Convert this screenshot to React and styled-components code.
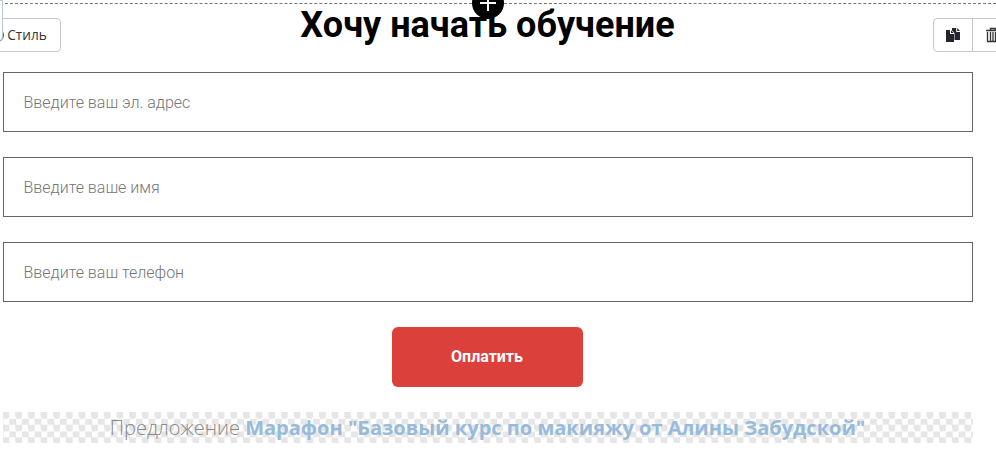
import React from 'react';
import styled, { createGlobalStyle } from 'styled-components';

const GlobalStyle = createGlobalStyle`
  * {
    box-sizing: border-box;
  }

  body {
    background: #fff;
    margin: 0;
  }
`;

const Section = styled.section`
  border-top: 1px dashed #777;
  height: 464px;
  margin-top: 3px;
  padding: 0 23px 0 3px;
  position: relative;
`;

const Screen = styled.div`
  display: flow-root;
  font-family: Roboto, sans-serif;
  height: 467px;
  overflow: hidden;
  position: relative;
`;

const Title = styled.h2`
  color: #000;
  font-size: 36px;
  font-weight: 700;
  height: 68px;
  line-height: 42px;
  margin: 0;
  padding-right: 1px;
  text-align: center;
  white-space: nowrap;
`;

const Form = styled.form`
  align-items: center;
  display: flex;
  flex-direction: column;
  gap: 25px;
`;

const Input = styled.input`
  background: #fff;
  border: 1px solid #666;
  border-radius: 0;
  color: #333;
  font: 300 16px Roboto, sans-serif;
  height: 60px;
  outline: none;
  padding: 0 20px 0 19.5px;
  width: 100%;

  &::placeholder {
    color: #757575;
    opacity: 1;
  }
`;

const Submit = styled.button`
  background: #dc403b;
  border: 0;
  border-radius: 6px;
  color: #fff;
  font: 700 16px Roboto, sans-serif;
  height: 60px;
  margin-right: 2px;
  padding: 0 0 2px;
  width: 191px;
`;

const Offer = styled.div`
  background: repeating-conic-gradient(#e6e6e6 0 25%, #fff 0 50%) -6.33px 0 / 12.66px 12.66px;
  color: #888;
  font: 300 20px/31px 'Open Sans', sans-serif;
  height: 31px;
  padding-right: 1px;
  text-align: center;
  white-space: nowrap;
  width: 100%;
`;

const OfferName = styled.b`
  color: #98bbdb;
  font-weight: 700;
`;

const AddButton = styled.button`
  align-items: center;
  background: #000;
  border: 0;
  border-radius: 50%;
  display: flex;
  height: 32px;
  justify-content: center;
  left: 472px;
  padding: 0;
  position: absolute;
  top: -13px;
  width: 32px;
`;

const Toolbar = styled.div`
  background: #fff;
  border: 1px solid #c8c8c8;
  border-radius: 4px;
  display: flex;
  height: 34px;
  left: ${(props) => props.$left}px;
  position: absolute;
  top: 18px;
`;

const ToolButton = styled.button`
  align-items: center;
  background: none;
  border: 0;
  color: #333;
  display: flex;
  font: 400 13.6px 'Open Sans', sans-serif;
  gap: 3px;
  justify-content: center;
  padding: 0 0 1px;
  width: ${(props) => props.$width}px;

  & + & {
    border-left: 1px solid #c8c8c8;
  }
`;

const PanelEdge = styled.div`
  background: #fff;
  border: 1px solid #b9c6d3;
  border-radius: 0 0 4px 0;
  height: 41px;
  left: -40px;
  position: absolute;
  top: 0;
  width: 43px;
`;

const PlusIcon = () => <svg height="16" viewBox="0 0 16 16" width="16">
  <path d="M8 0v16M0 8h16" stroke="#fff" strokeWidth="2"/>
</svg>;

const StyleIcon = () => <svg height="14" viewBox="0 0 14 14" width="14">
  <circle cx="7" cy="7" fill="none" r="6" stroke="#333" strokeWidth="1.8"/>
</svg>;

const CopyIcon = () => <svg fill="#24242c" height="16" viewBox="0 0 16 16" width="16">
  <path d="M7 1h4.2v4H15v8H9.5V6L7 3.4z"/>
  <path d="M12.2 1L15 4h-2.8z"/>
  <path d="M1 3h4v4h4v8H1z"/>
  <path d="M6 3.2L8.8 6H6z"/>
</svg>;

const TrashIcon = () => <svg fill="none" height="16" stroke="#333" viewBox="0 0 16 16" width="16">
  <path d="M1 3.5h14M5.5 3V1.5h5V3" strokeWidth="1.4"/>
  <path d="M2.5 5v9.5h11V5M5.5 5v9M8 5v9M10.5 5v9" strokeWidth="1.3"/>
</svg>;

const FIELDS = [
  { label: 'Введите ваш эл. адрес', name: 'email' },
  { label: 'Введите ваше имя', name: 'name' },
  { label: 'Введите ваш телефон', name: 'phone' }
];

const App = () => <Screen>
  <GlobalStyle/>
  <Section>
    <Title>Хочу начать обучение</Title>
    <Form>
      {FIELDS.map(({ label, name }) => <Input key={name} name={name} placeholder={label}/>)}
      <Submit type="button">Оплатить</Submit>
      <Offer>
        Предложение <OfferName>Марафон "Базовый курс по макияжу от Алины Забудской"</OfferName>
      </Offer>
    </Form>
  </Section>
  <Toolbar $left={-24}>
    <ToolButton $width={83}>
      <StyleIcon/>
      Стиль
    </ToolButton>
  </Toolbar>
  <PanelEdge/>
  <Toolbar $left={933}>
    <ToolButton $width={38}>
      <CopyIcon/>
    </ToolButton>
    <ToolButton $width={40}>
      <TrashIcon/>
    </ToolButton>
  </Toolbar>
  <AddButton>
    <PlusIcon/>
  </AddButton>
</Screen>;

export default App;
